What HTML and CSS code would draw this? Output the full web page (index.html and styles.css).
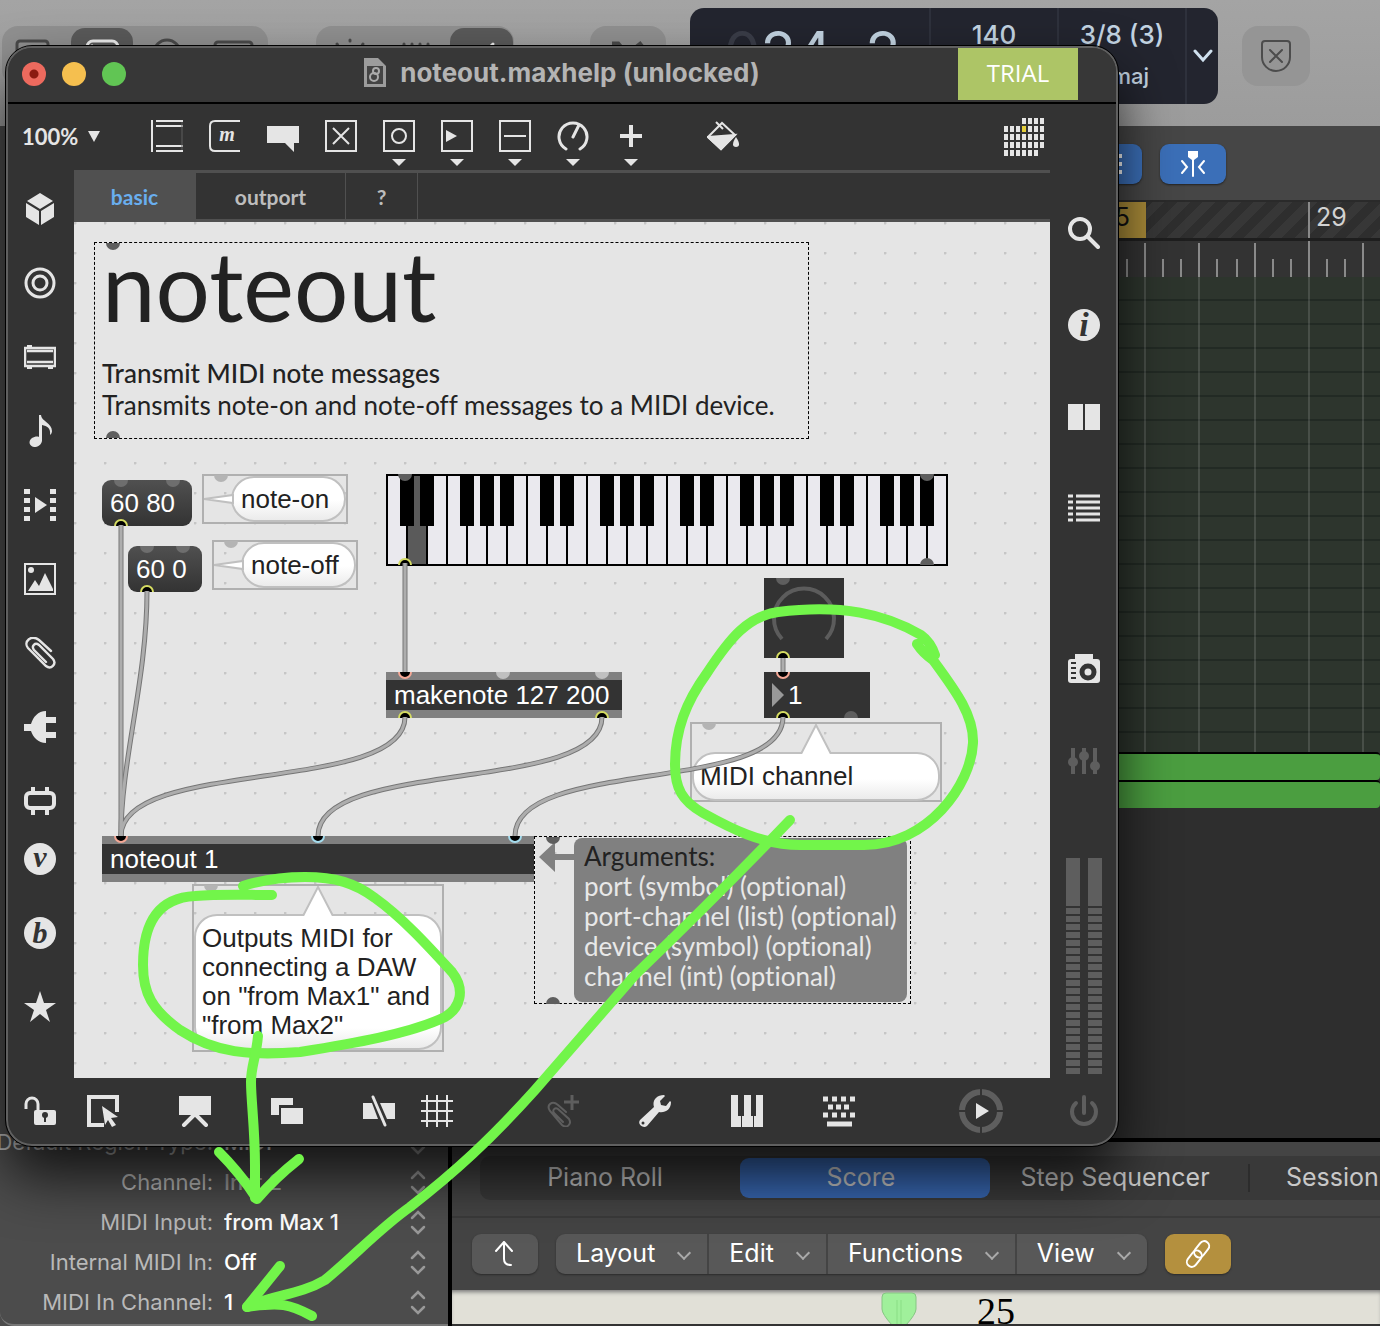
FILE: index.html
```html
<!doctype html>
<html lang="en">
  <head>
    <meta charset="UTF-8" />
    <meta name="viewport" content="width=device-width, initial-scale=1.0" />
    <title>noteout.maxhelp</title>
    <link rel="stylesheet" href="styles.css">
  </head>
  <body>
    <div class="daw">
      <header class="daw-header">
        <div class="tool-group">
          <svg width="266" height="60" fill="none" stroke="#4a4a4a" stroke-width="3">
            <rect x="69" y="2" width="62" height="56" rx="14" fill="#5a5a5a" stroke="none" />
            <rect x="15" y="15" width="31" height="26" rx="3" />
            <rect x="85" y="15" width="31" height="26" rx="6" stroke="#eee" />
            <path d="M89 19l8 8" stroke="#eee" />
            <circle cx="165" cy="27" r="13" />
            <rect x="213" y="16" width="37" height="24" rx="3" />
          </svg>
        </div>
        <div class="tool-group tool-group-mix">
          <svg width="198" height="60" fill="none" stroke="#4a4a4a" stroke-width="3" stroke-linecap="round">
            <rect x="134" y="2" width="63" height="56" rx="14" fill="#5a5a5a" stroke="none" />
            <path d="M34 14v1M21 18l1 2M47 18l-1 2M88 18v14M96 18v14M104 18v14M112 18v14" />
            <path d="M177 18l-18 18" stroke="#eee" />
          </svg>
        </div>
        <div class="tool-group tool-group-cut">
          <svg width="76" height="60" fill="none" stroke="#4a4a4a" stroke-width="5">
            <path d="M22 18h6l18 22M52 17l-10 8-20 14" />
          </svg>
        </div>
        <div class="lcd">
          <div class="lcd-position"><span class="dim">0</span>24&nbsp; 2</div>
          <div class="lcd-cell">140</div>
          <div class="lcd-cell lcd-key">3/8 (3)<span>maj</span></div>
          <button class="lcd-menu" aria-label="Display mode">
            <svg width="20" height="14" fill="none" stroke="#cfe0ee" stroke-width="3" stroke-linecap="round"><path d="M2 2l8 9 8-9" /></svg>
          </button>
        </div>
        <button class="replace-btn" aria-label="Replace">
          <svg width="32" height="34" fill="none" stroke="#4c4c4c" stroke-width="2" stroke-linecap="round">
            <path d="M5 2h22q3 0 3 3v13a14 14 0 0 1-28 0V5q0-3 3-3z" />
            <path d="M10 11l12 12M22 11L10 23" />
          </svg>
        </button>
      </header>

      <div class="daw-body">
        <aside class="inspector">
          <form class="params">
            <label for="region">Default Region Type:</label>
            <select id="region"><option>MIDI</option></select>
            <label for="channel">Channel:</label>
            <select id="channel" class="muted"><option>Inst 2</option></select>
            <label for="input">MIDI Input:</label>
            <select id="input"><option>from Max 1</option></select>
            <label for="internal">Internal MIDI In:</label>
            <select id="internal"><option>Off</option></select>
            <label for="inchannel">MIDI In Channel:</label>
            <select id="inchannel"><option>1</option></select>
          </form>
        </aside>

        <main class="workspace">
          <section class="tracks">
            <div class="track-tools">
              <button class="blue-btn" aria-label="List">
                <svg width="34" height="22" fill="#fff"><path d="M0 1h30v4H0zM0 9h30v4H0zM0 17h30v4H0z" /></svg>
              </button>
              <button class="blue-btn" aria-label="Catch playhead">
                <svg width="26" height="28" fill="none" stroke="#fff" stroke-width="2" stroke-linecap="round">
                  <path d="M8 1h10v6l-4 3h-2L8 7z" fill="#fff" stroke="none" />
                  <path d="M13 8v18M2 11l5 6-5 6M24 11l-5 6 5 6" />
                </svg>
              </button>
            </div>
            <div class="ruler"><span class="cycle">25</span><span class="bar">29</span></div>
            <div class="ticks">
              <svg width="262" height="36" stroke="#8a8a8a" stroke-width="2">
                <path d="M27 2v34M81 2v34M137 2v34M191 0v36M245 2v34" />
                <path d="M9 18v18M45 18v18M63 18v18M99 18v18M119 18v18M155 18v18M173 18v18M209 18v18M227 18v18" />
              </svg>
            </div>
            <div class="lanes">
              <svg width="262" height="475" stroke="#fff" stroke-opacity=".13" stroke-width="2">
                <path d="M27 0v475M81 0v475M137 0v475M191 0v475M245 0v475" />
              </svg>
            </div>
            <div class="region"></div>
            <div class="region"></div>
          </section>

          <section class="editor">
            <nav class="editor-tabs">
              <button>Piano Roll</button>
              <button class="active">Score</button>
              <button>Step Sequencer</button>
              <button class="session">Session Player</button>
            </nav>
            <div class="editor-menu">
              <button class="up-btn" aria-label="Up">
                <svg width="24" height="28" fill="none" stroke="#fff" stroke-width="2" stroke-linecap="round" stroke-linejoin="round"><path d="M3 11l8-9 8 9M11 2v17q0 6 7 6" /></svg>
              </button>
              <div class="menu-group">
                <button>Layout <i></i></button>
                <button>Edit <i></i></button>
                <button>Functions <i></i></button>
                <button>View <i></i></button>
              </div>
              <button class="link-btn" aria-label="Link">
                <svg width="30" height="30" fill="none" stroke="#fff" stroke-width="2">
                  <g transform="rotate(-52 15 15)"><rect x="0" y="10" width="18" height="10" rx="5" /><rect x="12" y="10" width="18" height="10" rx="5" /></g>
                </svg>
              </button>
            </div>
            <div class="paper">
              <svg width="36" height="34"><path d="M5 1h26q4 0 4 4v12q0 5-10 16H11Q1 22 1 17V5q0-4 4-4z" fill="#a0f09b" stroke="#86c583" /><path d="M16 8v24M20 8v24" stroke="#8ade85" /></svg>
              <span>25</span>
            </div>
          </section>
        </main>
      </div>
    </div>

    <div class="max-window">
      <header class="titlebar">
        <div class="lights">
          <button class="light close" aria-label="Close"></button>
          <button class="light minimize" aria-label="Minimize"></button>
          <button class="light zoom" aria-label="Zoom"></button>
        </div>
        <div class="window-title">
          <svg width="22" height="30" fill="none">
            <path d="M0 0h14l8 8v21H0z" fill="#9c9c9c" />
            <path d="M3 8h16v18H3z" fill="#444" />
            <circle cx="10" cy="19" r="4" stroke="#aaa" stroke-width="2" /><circle cx="12" cy="13" r="3" stroke="#aaa" stroke-width="2" />
          </svg>
          noteout.maxhelp (unlocked)
        </div>
        <div class="trial">TRIAL</div>
      </header>

      <div class="toolbar">
        <select class="zoom-level" aria-label="Zoom level"><option>100%</option></select>
        <div class="tools">
          <button aria-label="Object"><svg width="32" height="32" fill="none" stroke="#e5e5e5" stroke-width="2"><path d="M1 0v32M5 1h27M5 6h27M5 26h27M5 31h27" /><path d="M31 2v28" stroke="#5e5e5e" stroke-width="1" /></svg></button>
          <button aria-label="Message"><svg width="32" height="32" fill="none" stroke="#e5e5e5" stroke-width="2"><path d="M31 1H6Q1 1 1 6v20q0 5 5 5h25" /><text x="18" y="21" class="glyph-m">m</text></svg></button>
          <button aria-label="Comment"><svg width="32" height="32" fill="#e5e5e5"><path d="M0 6h32v17h-5v9l-9-9H0z" /></svg></button>
          <button aria-label="Toggle"><svg width="32" height="32" fill="none" stroke="#e5e5e5" stroke-width="2"><path d="M1 1h30v30H1zM8 8l16 16M24 8L8 24" /></svg></button>
          <button class="has-menu" aria-label="Button"><svg width="32" height="32" fill="none" stroke="#e5e5e5" stroke-width="2"><path d="M1 1h30v30H1z" /><circle cx="16" cy="16" r="7" /></svg></button>
          <button class="has-menu" aria-label="Number"><svg width="32" height="32" fill="none" stroke="#e5e5e5" stroke-width="2"><path d="M1 1h30v30H1z" /><path d="M5 10l11 6-11 6z" fill="#e5e5e5" stroke="none" /></svg></button>
          <button class="has-menu" aria-label="Slider"><svg width="32" height="32" fill="none" stroke="#e5e5e5" stroke-width="2"><path d="M1 1h30v30H1zM5 16h22" /></svg></button>
          <button class="has-menu" aria-label="Dial"><svg width="32" height="32" fill="none" stroke="#e5e5e5" stroke-width="3" stroke-linecap="round"><path d="M9 29a14 14 0 1 1 14 0M16 17l6-12" /></svg></button>
          <button class="has-menu" aria-label="Add"><svg width="32" height="32" stroke="#e5e5e5" stroke-width="4"><path d="M16 5v22M5 16h22" /></svg></button>
        </div>
        <button class="paint" aria-label="Format"><svg width="32" height="32" fill="none" stroke="#e5e5e5" stroke-width="2"><path d="M1 17L15 3l13 12-14 14zM9 2l7 7" /><path d="M1 17l27-2-14 14z" fill="#e5e5e5" /><path d="M29 17c4 6 4 10 0 10s-4-4 0-10z" fill="#e5e5e5" stroke="none" /></svg></button>
        <button class="calendar" aria-label="Clippings">
          <svg width="40" height="38" fill="none" stroke="#e5e5e5" stroke-width="6">
            <path d="M18 3h22" stroke-dasharray="4 2" />
            <path d="M0 11h40M0 19h40M0 27h40M0 35h34" stroke-dasharray="4 2" />
            <path d="M18 11h4" stroke="#e5cf3b" />
          </svg>
        </button>
      </div>

      <div class="window-body">
        <nav class="side side-left">
          <button aria-label="Packages"><svg width="32" height="32" fill="#e5e5e5"><path d="M16 0l13 8-13 8L3 8zM2 10l13 8v14L2 24zM30 10l-13 8v14l13-8z" /></svg></button>
          <button aria-label="Objects"><svg width="32" height="32" fill="none" stroke="#e5e5e5" stroke-width="3"><circle cx="16" cy="16" r="14" /><circle cx="16" cy="16" r="7" /></svg></button>
          <button aria-label="Devices"><svg width="32" height="32" fill="none" stroke="#e5e5e5" stroke-width="2"><path d="M1 7h30v18H1zM3 10h26M3 21h26" stroke-width="2.5" /><path d="M4 7V5h3v2M4 26v1h3v-1M25 26v1h3v-1" fill="#e5e5e5" /></svg></button>
          <button aria-label="Audio"><svg width="32" height="32" fill="#e5e5e5"><path d="M15 0h2c0 6 11 8 11 16 0 2-1 3-2 4 1-7-3-9-8-10v16c-1 4-4 6-8 6-5-1-6-6-2-9 2-1 5-2 7-1z" /></svg></button>
          <button aria-label="Video"><svg width="32" height="32" fill="none" stroke="#e5e5e5" stroke-width="6"><path d="M3 0v32M29 0v32" stroke-dasharray="5 4" /><path d="M11 8l12 8-12 8z" fill="#e5e5e5" stroke="none" /></svg></button>
          <button aria-label="Images"><svg width="32" height="32" fill="#e5e5e5"><path d="M1 1h30v30H1z" fill="none" stroke="#e5e5e5" stroke-width="2" /><circle cx="7" cy="7" r="3" /><path d="M4 28l7-11 4 6 6-13 8 16v2z" /></svg></button>
          <button aria-label="Attachments"><svg width="32" height="32" fill="none" stroke="#e5e5e5" stroke-width="3" stroke-linecap="round"><path id="clip" d="M27 14L15 3C7-3-1 5 4 11l18 18c5 4 11-2 7-7L15 8c-4-3-8 1-5 5l12 12" stroke-width="2.4" /></svg></button>
          <button aria-label="Plug-ins"><svg width="32" height="32" fill="#e5e5e5"><path d="M22 0v32C14 32 9 26 7 20H0v-7h7C9 6 14 0 22 0zM22 6h10v6H22zM22 21h10v6H22z" /></svg></button>
          <button aria-label="Modules"><svg width="32" height="32" fill="none" stroke="#e5e5e5" stroke-width="4"><rect x="2" y="8" width="28" height="15" rx="4" /><path d="M9 2v5M23 2v5M9 24v6M23 24v6" /></svg></button>
          <button class="near" aria-label="Vizzie"><svg width="32" height="32"><circle cx="16" cy="16" r="16" fill="#e5e5e5" /><text x="16" y="24" class="glyph">v</text></svg></button>
          <button aria-label="BEAP"><svg width="32" height="32"><circle cx="16" cy="16" r="16" fill="#e5e5e5" /><text x="16" y="26" class="glyph">b</text></svg></button>
          <button aria-label="Favorites"><svg width="32" height="32" fill="#e5e5e5"><path d="M16 0l4 12h12l-10 7 4 12-10-8-10 8 4-12-10-7h12z" /></svg></button>
        </nav>

        <div class="center">
          <nav class="patch-tabs">
            <button class="active">basic</button>
            <button>outport</button>
            <button class="small">?</button>
          </nav>

          <div class="canvas">
            <div class="panel help-title">
              <h1>noteout</h1>
              <p class="digest">Transmit MIDI note messages</p>
              <p>Transmits note-on and note-off messages to a MIDI device.</p>
            </div>

            <button class="message on">60 80</button>
            <button class="message off">60 0</button>

            <div class="bubble-frame side-bubble note-on"><svg width="32" height="46"><path d="M0 23l29-4v8z" /></svg><p>note-on</p></div>
            <div class="bubble-frame side-bubble note-off"><svg width="32" height="46"><path d="M0 23l29-4v8z" /></svg><p>note-off</p></div>

            <svg class="kslider" width="562" height="92">
              <path d="M1 1h560v90H1z" fill="#eae9ee" />
              <path d="M21 2h20v88H21z" fill="#5a5a5a" />
              <path d="M21 0v92M41 0v92M61 0v92M81 0v92M101 0v92M121 0v92M141 0v92M161 0v92M181 0v92M201 0v92M221 0v92M241 0v92M261 0v92M281 0v92M301 0v92M321 0v92M341 0v92M361 0v92M381 0v92M401 0v92M421 0v92M441 0v92M461 0v92M481 0v92M501 0v92M521 0v92M541 0v92" stroke="#000" stroke-width="2" />
              <path d="M28 2h6v50h-6z" fill="#5a5a5a" />
              <path d="M21 0v52M41 0v52M81 0v52M101 0v52M121 0v52M161 0v52M181 0v52M221 0v52M241 0v52M261 0v52M301 0v52M321 0v52M361 0v52M381 0v52M401 0v52M441 0v52M461 0v52M501 0v52M521 0v52M541 0v52" stroke="#000" stroke-width="14" />
              <path d="M1 1h560v90H1z" fill="none" stroke="#000" stroke-width="2" />
            </svg>

            <svg class="dial" width="80" height="80" fill="none" stroke="#5c5c5c" stroke-width="4"><path d="M18 61a30 30 0 1 1 44 0" /></svg>
            <div class="number"><svg width="12" height="24"><path d="M0 0l12 12L0 24z" fill="#999" /></svg><input type="text" value="1" aria-label="MIDI channel" /></div>

            <div class="object makenote">makenote 127 200</div>
            <div class="object noteout">noteout 1</div>

            <div class="bubble-frame top-bubble channel"><svg width="32" height="30"><path d="M1 30L16 1l15 29" /></svg><p>MIDI channel</p></div>
            <div class="bubble-frame top-bubble outputs"><svg width="32" height="30"><path d="M1 30L16 1l15 29" /></svg><p>Outputs MIDI for connecting a DAW on "from Max1" and "from Max2"</p></div>

            <div class="panel arguments">
              <svg width="38" height="30" fill="#808080"><path d="M3 15L19 0v12h19v6H19v12z" /></svg>
              <div>
                <strong>Arguments:</strong>
                <p>port (symbol) (optional)</p>
                <p>port-channel (list) (optional)</p>
                <p>device (symbol) (optional)</p>
                <p>channel (int) (optional)</p>
              </div>
            </div>

            <!-- patch cords and ports -->
            <svg class="cords" width="100%" height="100%">
              <defs>
                <path id="in" d="M-7 0a7 7 0 0 0 14 0z" />
                <path id="out" d="M-7 0a7 7 0 0 1 14 0z" />
                <path id="inring" d="M-6 0a6 6 0 0 0 12 0" fill="#000" stroke-width="2" />
                <path id="outring" d="M-6 0a6 6 0 0 1 12 0" fill="#000" stroke="#d5dc62" stroke-width="2" />
                <g id="wires">
                  <path d="M47 303V614" />
                  <path d="M73 369C73 458 47 538 47 614" />
                  <path d="M331 341V450" />
                  <path d="M331 495C331 572 47 536 47 614" />
                  <path d="M528 495C528 572 244 536 244 614" />
                  <path d="M709 436V450" />
                  <path d="M709 495C709 572 441 536 441 614" />
                </g>
              </defs>
              <g fill="#5e5e5e">
                <use href="#in" x="39" y="21" /><use href="#out" x="39" y="216" />
                <use href="#in" x="331" y="252" /><use href="#in" x="853" y="252" /><use href="#out" x="853" y="343" />
                <use href="#in" x="709" y="356" /><use href="#out" x="777" y="496" />
                <use href="#in" x="479" y="615" /><use href="#out" x="479" y="782" />
              </g>
              <g fill="#6e6e6e">
                <use href="#in" x="47" y="258" /><use href="#in" x="99" y="258" />
                <use href="#in" x="73" y="324" /><use href="#in" x="109" y="324" />
              </g>
              <g fill="#b4b4b4">
                <use href="#in" x="147" y="253" /><use href="#in" x="157" y="319" />
                <use href="#in" x="635" y="501" /><use href="#in" x="137" y="663" />
                <use href="#in" x="429" y="450" fill="#c0c0c0" /><use href="#in" x="528" y="450" fill="#c0c0c0" />
              </g>
              <g stroke="#f5a896"><use href="#inring" x="47" y="614" /><use href="#inring" x="331" y="450" /><use href="#inring" x="709" y="450" /></g>
              <g stroke="#a4dcee"><use href="#inring" x="244" y="614" /><use href="#inring" x="441" y="614" /></g>
              <use href="#outring" x="47" y="304" /><use href="#outring" x="73" y="370" /><use href="#outring" x="331" y="343" />
              <use href="#outring" x="331" y="496" /><use href="#outring" x="528" y="496" />
              <use href="#outring" x="709" y="436" /><use href="#outring" x="709" y="496" />
              <use href="#wires" fill="none" stroke="#767676" stroke-width="5" />
              <use href="#wires" fill="none" stroke="#adadad" stroke-width="3" />
            </svg>
          </div>
        </div>

        <nav class="side side-right">
          <button aria-label="Search"><svg width="32" height="32" fill="none" stroke="#e5e5e5" stroke-width="4" stroke-linecap="round"><circle cx="12" cy="12" r="10" /><path d="M20 20l10 10" /></svg></button>
          <button aria-label="Inspector"><svg width="32" height="32"><circle cx="16" cy="16" r="16" fill="#e5e5e5" /><text x="16" y="27" class="glyph big">i</text></svg></button>
          <button aria-label="Reference"><svg width="32" height="32" fill="#e5e5e5"><path d="M0 3h15v26H0zM17 3h15v26H17z" /></svg></button>
          <button aria-label="Console"><svg width="32" height="32" fill="none" stroke="#e5e5e5" stroke-width="3"><path d="M0 3h5M8 3h24M0 9h5M8 9h24M0 15h5M8 15h24M0 21h5M8 21h24M0 27h5M8 27h24" /></svg></button>
          <button class="far" aria-label="Snapshots"><svg width="32" height="32" fill="#e5e5e5"><path d="M7 1h18v5H7z" /><rect y="6" width="32" height="24" rx="3" /><circle cx="20" cy="19" r="6" fill="none" stroke="#333" stroke-width="5" /><path d="M3 10h5M3 15h5M3 20h5M3 25h5" stroke="#333" stroke-width="2" /></svg></button>
          <button aria-label="Mixer"><svg width="32" height="32" fill="#5e5e5e" stroke="#5e5e5e" stroke-width="4"><path d="M5 3v26M16 3v26M27 3v26" /><circle cx="5" cy="17" r="3" /><circle cx="16" cy="11" r="3" /><circle cx="27" cy="21" r="3" /></svg></button>
          <div class="meters"><span></span><span></span></div>
        </nav>
      </div>

      <footer class="bottombar">
        <button class="lock" aria-label="Lock"><svg width="32" height="32" fill="#e5e5e5"><path d="M2 14v-5a6 6 0 0 1 12 0v6" fill="none" stroke="#e5e5e5" stroke-width="3" /><rect x="10" y="15" width="22" height="15" rx="2" /><path d="M21 21v6" stroke="#333" stroke-width="2" /><circle cx="21" cy="20" r="3" fill="#333" /></svg></button>
        <div class="bottom-group">
          <button aria-label="Select"><svg width="32" height="32" fill="#e5e5e5"><path d="M30 17V2H2v28h15" fill="none" stroke="#e5e5e5" stroke-width="4" /><path d="M15 11l16 11-7 1 5 7-4 2-4-7-3 5z" /></svg></button>
          <button aria-label="Presentation"><svg width="32" height="32" fill="#e5e5e5"><path d="M0 1h32v19H0z" /><path d="M16 19L5 30M16 19l11 11" stroke="#e5e5e5" stroke-width="4" stroke-linecap="round" /></svg></button>
          <button aria-label="Windows"><svg width="32" height="32" fill="#e5e5e5"><path d="M0 3h22v7H8v10H0zM10 13h22v16H10z" /></svg></button>
          <button aria-label="Hide cords"><svg width="32" height="32" fill="#e5e5e5" stroke="#e5e5e5"><path d="M0 8h9l6 16H0zM17 8h15v16h-8z" stroke="none" /><path d="M10 2l12 28" stroke-width="3" stroke-linecap="round" /></svg></button>
        </div>
        <button class="grid-btn" aria-label="Grid"><svg width="32" height="32" stroke="#e5e5e5" stroke-width="2"><path d="M6 0v32M16 0v32M26 0v32M0 6h32M0 16h32M0 26h32" /></svg></button>
        <div class="bottom-group extras">
          <button aria-label="Add clip"><svg width="32" height="32" fill="none" stroke="#5e5e5e" stroke-width="3"><path d="M19 17l-8-7C5 5-1 10 3 16l12 14c5 4 10-1 7-6L11 14c-3-2-6 1-4 4l9 9" stroke-width="2" stroke-linecap="round" /><path d="M17 7h15M25 0v15" /></svg></button>
          <button aria-label="Tools"><svg width="32" height="32" fill="#e5e5e5"><path d="M1 25L15 12C13 6 17 0 25 0l1 1-5 5 1 4 5 1 4-5 1 1c0 8-6 11-12 10L8 31c-4 3-10-2-7-6z" /><circle cx="4" cy="28" r="1.5" fill="#333" /></svg></button>
          <button aria-label="Keyboard"><svg width="32" height="32" fill="#e5e5e5"><path d="M0 0h7v21h3v11H0zM13 0h7v21h2v11H11V21h2zM25 0h7v32h-9V21h2z" /></svg></button>
          <button aria-label="Keys"><svg width="32" height="32" fill="none" stroke="#e5e5e5" stroke-width="5"><path d="M0 4h32M0 20h32" stroke-dasharray="5 4" /><path d="M5 12h22" stroke-dasharray="5 3" /><path d="M4 29h25" /></svg></button>
        </div>
        <button class="play" aria-label="Play"><svg width="44" height="44"><circle cx="22" cy="22" r="19" fill="none" stroke="#5e5e5e" stroke-width="6" /><path d="M22 0v44M0 22h44" stroke="#333" stroke-width="2" /><circle cx="22" cy="22" r="15" fill="#333" /><path d="M17 14l13 8-13 8z" fill="#e5e5e5" /></svg></button>
        <button class="power" aria-label="Audio on"><svg width="32" height="32" fill="none" stroke="#5e5e5e" stroke-width="4" stroke-linecap="round"><path d="M16 2v16M8 8a12 12 0 1 0 16 0" /></svg></button>
      </footer>
    </div>

    <!-- hand-drawn marker notes -->
    <svg class="marker" width="100%" height="100%">
      <path d="M917 644C921 650 927 656 933 660C955 690 974 715 973 743C971 785 928 845 864 845H800C762 845 730 828 703 813C682 801 675 788 675 765C675 730 686 702 707 673C730 638 748 616 778 612C842 604 885 614 921 635C928 640 932 646 935 655" />
      <path d="M243 886C262 880 285 877 305 877C335 877 355 883 375 898C403 918 430 948 452 972C466 990 460 1008 445 1017C410 1034 350 1044 300 1052C250 1056 215 1053 180 1030C152 1010 143 993 143 965C143 925 157 898 195 896C220 894 245 895 272 895" />
      <path d="M258 1036C256 1058 251 1066 251 1082C251 1100 255 1130 255 1165V1198" />
      <path d="M219 1152C235 1168 246 1182 257 1199C268 1186 280 1174 299 1159" />
      <path d="M790 820C744 868 690 922 635 975L535 1090C490 1140 455 1172 410 1207C380 1228 350 1260 325 1280C300 1295 272 1295 247 1307" />
      <path d="M280 1266L247 1307C280 1302 290 1304 312 1316" />
    </svg>
  </body>
</html>
```
FILE: styles.css
```css
:root {
  --chrome: #333333;
  --icon: #e5e5e5;
  --ink: #72f54a;
  --canvas: #e5e5e5;
}

* {
  box-sizing: border-box;
}

body {
  position: relative;
  margin: 0;
  min-height: 100vh;
  overflow: hidden;
  background: #333;
  font-family: Inter, "Liberation Sans", sans-serif;
}

h1,
p {
  margin: 0;
  font-weight: 400;
}

button,
select,
input {
  margin: 0;
  padding: 0;
  border: 0;
  background: none;
  color: inherit;
  font: inherit;
  appearance: none;
}

button {
  display: flex;
  align-items: center;
  justify-content: center;
}

svg {
  display: block;
  flex-shrink: 0;
}

/* DAW behind the patcher */
.daw {
  display: flex;
  flex-direction: column;
  min-height: 100vh;
}

.daw-header {
  display: flex;
  align-items: flex-start;
  height: 126px;
  padding: 8px 0 0 2px;
  background: linear-gradient(#a4a4a4, #9c9c9c);
}

.tool-group {
  margin-top: 18px;
  border-radius: 16px;
  background: #909090;
}

.tool-group-mix {
  margin-left: 48px;
}

.tool-group-cut {
  margin-left: 76px;
}

.lcd {
  display: flex;
  width: 528px;
  height: 96px;
  margin-left: 24px;
  border-radius: 14px;
  background: #23252f;
  color: #c3d4e2;
}

.lcd-position {
  width: 239px;
  padding: 12px 0 0 34px;
  font-size: 58px;
  line-height: 64px;
  white-space: nowrap;
}

.dim {
  color: #3a3d48;
}

.lcd-cell {
  width: 128px;
  padding-top: 12px;
  border-left: 2px solid #2e313c;
  font-size: 26px;
  font-weight: 500;
  line-height: 30px;
  text-align: center;
}

.lcd-key span {
  display: block;
  padding: 12px 36px 0 0;
  font-size: 22px;
  line-height: 28px;
  text-align: right;
}

.lcd-menu {
  flex: 1;
  border-left: 2px solid #2e313c;
}

.replace-btn {
  width: 68px;
  height: 60px;
  margin: 18px 0 0 24px;
  border-radius: 16px;
  background: #959595;
}

.daw-body {
  display: flex;
  flex: 1;
}

.inspector {
  display: flex;
  flex-direction: column;
  justify-content: flex-end;
  width: 452px;
  border-right: 4px solid #000;
  background: #4c4c4c;
}

.params {
  display: grid;
  grid-template-columns: 213px 1fr;
  grid-auto-rows: 40px;
  align-items: center;
  column-gap: 11px;
  padding: 0 22px 2px 0;
  border-bottom: 2px solid #777;
  border-radius: 0 0 0 14px;
  color: #b9b9b9;
  font-size: 22px;
  white-space: nowrap;
}

.params label {
  justify-self: end;
}

.params select {
  width: 100%;
  height: 30px;
  background: url("data:image/svg+xml,%3Csvg xmlns='http://www.w3.org/2000/svg' width='16' height='26' fill='none' stroke='%23999' stroke-width='2.5' stroke-linecap='round'%3E%3Cpath d='M2 9l6-6 6 6M2 18l6 6 6-6'/%3E%3C/svg%3E") no-repeat right center;
  color: #fff;
  font-weight: 500;
}

.params select.muted {
  color: #999;
}

.workspace {
  display: flex;
  flex: 1;
  flex-direction: column;
  min-width: 0;
}

.tracks {
  flex: 1;
  border-bottom: 4px solid #000;
  background: #2e2e2e;
}

.track-tools {
  display: flex;
  gap: 18px;
  justify-content: flex-end;
  height: 74px;
  padding: 18px 154px 0 0;
  background: #464646;
}

.blue-btn {
  width: 66px;
  height: 40px;
  border-radius: 9px;
  background: #3b6fb8;
  box-shadow: 0 1px 2px #222;
}

.ruler {
  display: flex;
  justify-content: flex-end;
  height: 41px;
  border-top: 2px solid #2a2a2a;
  border-bottom: 3px solid #1e1e1e;
  background: repeating-linear-gradient(135deg, #2e2e2e 0 9px, #373737 9px 18px);
  color: #d2d2d2;
  font-size: 25px;
  line-height: 30px;
}

.cycle {
  width: 120px;
  padding-right: 16px;
  background: #a88a38;
  color: #111;
  text-align: right;
}

.bar {
  width: 72px;
  margin-left: 162px;
  padding-left: 6px;
  border-left: 2px solid #8a8a8a;
}

.ticks,
.lanes {
  display: flex;
  justify-content: flex-end;
  background-color: #333;
}

.lanes {
  background: repeating-linear-gradient(#2d352d 0 22px, #222a24 22px 24px);
}

.region {
  height: 28px;
  border-top: 2px solid #000;
  border-radius: 0 4px 4px 0;
  background: #4b9e40;
}

.editor {
  background: #444;
  color: #e0e0e0;
  font-size: 25px;
}

.editor-tabs {
  display: flex;
  align-items: center;
  height: 44px;
  margin: 14px 0 16px 28px;
  overflow: hidden;
  border-radius: 10px 0 0 10px;
  background: #393939;
  color: #c8c8c8;
}

.editor-tabs button {
  flex: 0 0 250px;
  height: 40px;
  padding-bottom: 2px;
  white-space: nowrap;
}

.editor-tabs .active {
  margin-left: 10px;
  padding-right: 8px;
  border-radius: 9px;
  background: #3766b0;
}

.editor-tabs .session {
  height: 28px;
  margin-left: 8px;
  padding-left: 36px;
  border-left: 2px solid #2c2c2c;
  justify-content: flex-start;
}

.editor-menu {
  display: flex;
  gap: 18px;
  padding: 16px 20px;
  border-top: 2px solid #3a3a3a;
  color: #fff;
}

.up-btn,
.link-btn {
  width: 66px;
  height: 40px;
  border-radius: 9px;
  background: #585858;
  box-shadow: 0 1px 2px #2a2a2a;
}

.link-btn {
  background: #b4903e;
}

.menu-group {
  display: flex;
  border-radius: 9px;
  background: #585858;
  box-shadow: 0 1px 2px #2a2a2a;
}

.menu-group button {
  gap: 24px;
  padding: 0 18px 2px 20px;
}

.menu-group button + button {
  border-left: 2px solid #444;
}

.menu-group i {
  width: 10px;
  height: 10px;
  border: solid #aaa;
  border-width: 0 2px 2px 0;
  transform: rotate(45deg);
}

.paper {
  display: flex;
  align-items: flex-start;
  gap: 60px;
  height: 36px;
  padding: 2px 0 0 429px;
  overflow: hidden;
  border-bottom: 2px solid #333;
  background: #e1e0d7;
  box-shadow: inset 0 4px 4px -2px #777;
  color: #000;
  font: 38px/38px "Liberation Serif", serif;
}

/* Patcher window */
.max-window {
  position: absolute;
  top: 46px;
  right: 262px;
  bottom: 180px;
  left: 6px;
  display: flex;
  flex-direction: column;
  overflow: hidden;
  border: 2px solid #606060;
  border-radius: 26px;
  outline: 1px solid #000;
  background: var(--chrome);
  box-shadow: 0 30px 56px rgba(0, 0, 0, 0.75);
  color: var(--icon);
  font-family: Lato, sans-serif;
}

.titlebar {
  display: grid;
  grid-template-columns: 1fr auto 1fr;
  height: 56px;
  border-bottom: 2px solid #000;
  background: #373737;
}

.lights {
  display: flex;
  gap: 16px;
  align-items: center;
  padding: 0 0 2px 14px;
}

.light {
  width: 24px;
  height: 24px;
  border-radius: 50%;
}

.close {
  background: radial-gradient(circle, #8c1a10 0 4px, #ed6a5e 5px);
}

.minimize {
  background: #f5bf4f;
}

.zoom {
  background: #61c554;
}

.window-title {
  display: flex;
  gap: 14px;
  align-items: center;
  padding-bottom: 4px;
  color: #b4b4b4;
  font: 700 26px/32px Inter, sans-serif;
}

.trial {
  justify-self: end;
  width: 120px;
  height: 52px;
  margin-right: 38px;
  background: #adc566;
  color: #fff;
  font: 24px/50px "Open Sans", sans-serif;
  text-align: center;
}

.toolbar {
  display: flex;
  align-items: center;
  height: 66px;
  padding: 0 72px 2px 14px;
}

.zoom-level {
  width: 80px;
  height: 32px;
  background: url("data:image/svg+xml,%3Csvg xmlns='http://www.w3.org/2000/svg' width='12' height='11'%3E%3Cpath d='M0 0h12L6 11z' fill='%23e5e5e5'/%3E%3C/svg%3E") no-repeat right 2px center;
  font-size: 22px;
  font-weight: 700;
}

.tools {
  display: flex;
  gap: 26px;
  margin-left: 49px;
}

.tools button {
  position: relative;
}

.has-menu::after {
  content: "";
  position: absolute;
  top: 39px;
  left: 9px;
  border: 7px solid transparent;
  border-top-color: var(--icon);
  border-bottom: 0;
}

.paint {
  margin-left: 60px;
}

.calendar {
  margin-left: auto;
  padding-top: 2px;
}

.glyph,
.glyph-m {
  fill: #333;
  font: italic 700 30px "Liberation Serif", serif;
  text-anchor: middle;
}

.glyph-m {
  fill: var(--icon);
  stroke: none;
  font-size: 20px;
}

.big {
  font-size: 34px;
}

.window-body {
  display: flex;
  flex: 1;
  min-height: 0;
}

.side {
  display: flex;
  flex-direction: column;
  align-items: center;
  width: 66px;
}

.side-left {
  gap: 42px;
  padding: 23px 2px 0 0;
}

.side-left .near {
  margin-top: -16px;
}

.side-right {
  gap: 60px;
  padding: 47px 0 0 2px;
}

.side-right .far {
  margin-top: 68px;
}

.meters {
  display: flex;
  flex: 1;
  gap: 8px;
  margin: 21px 0 2px;
}

.meters span {
  width: 14px;
  background:
    linear-gradient(#5e5e5e 48px, transparent 48px),
    repeating-linear-gradient(transparent 0 2px, #5e5e5e 2px 8px);
}

.center {
  display: flex;
  flex: 1;
  flex-direction: column;
  min-width: 0;
}

.patch-tabs {
  display: flex;
  height: 52px;
  border-top: 3px solid #505050;
  border-bottom: 3px solid #505050;
  color: #bdbdbd;
  font-size: 21px;
  font-weight: 700;
}

.patch-tabs button {
  width: 150px;
  border-right: 1px solid #505050;
}

.patch-tabs .active {
  width: 122px;
  background: #505050;
  color: #69aeee;
}

.patch-tabs .small {
  width: 72px;
}

.canvas {
  position: relative;
  flex: 1;
  overflow: hidden;
  background: radial-gradient(circle at 1px 1px, #c6c6c6 0 1px, transparent 2px) 0 0 / 30px 30px var(--canvas);
  color: #222;
  font: 26px/30px "Liberation Sans", Arial, sans-serif;
  font-variant-ligatures: none;
}

.cords,
.marker {
  position: absolute;
  top: 0;
  left: 0;
  pointer-events: none;
}

.panel {
  position: absolute;
  border: 1px dashed #000;
  background: var(--canvas);
  font-family: Lato, sans-serif;
}

.help-title {
  top: 20px;
  left: 20px;
  width: 715px;
  height: 197px;
  padding: 0 7px;
  line-height: 32px;
  white-space: nowrap;
}

.help-title h1 {
  padding-bottom: 30px;
  font-size: 96px;
  line-height: 84px;
}

.digest {
  font-weight: 500;
}

.message {
  position: absolute;
  height: 46px;
  border-radius: 9px;
  background: linear-gradient(#505050, #333);
  color: #fff;
  padding-left: 8px;
  justify-content: flex-start;
}

.on {
  top: 258px;
  left: 28px;
  width: 90px;
}

.off {
  top: 324px;
  left: 54px;
  width: 74px;
}

.bubble-frame {
  position: absolute;
  display: flex;
  border: 2px solid #b0b0b0;
}

.bubble-frame svg {
  position: relative;
  z-index: 1;
  fill: #fff;
  stroke: #c0c0c0;
  stroke-width: 2;
}

.bubble-frame p {
  flex: 1;
  padding: 6px 8px;
  border: 2px solid #c0c0c0;
  border-radius: 23px;
  background: linear-gradient(#fff calc(100% - 20px), #ebebeb);
}

.side-bubble {
  width: 146px;
  height: 50px;
}

.side-bubble svg {
  margin-right: -5px;
}

.note-on {
  top: 252px;
  left: 128px;
}

.note-off {
  top: 318px;
  left: 138px;
}

.top-bubble {
  flex-direction: column;
  width: 252px;
}

.top-bubble svg {
  align-self: center;
  margin-bottom: -2px;
}

.channel {
  top: 500px;
  left: 616px;
  height: 80px;
}

.top-bubble p {
  padding: 8px 6px;
  line-height: 29px;
}

.outputs {
  top: 662px;
  left: 118px;
  height: 168px;
}

.kslider {
  position: absolute;
  top: 252px;
  left: 312px;
}

.dial {
  position: absolute;
  top: 356px;
  left: 690px;
  background: var(--chrome);
}

.number {
  position: absolute;
  top: 450px;
  left: 690px;
  display: flex;
  align-items: center;
  gap: 4px;
  width: 106px;
  height: 46px;
  padding-left: 8px;
  background: var(--chrome);
  color: #fff;
}

.number input {
  width: 60px;
}

.object {
  position: absolute;
  height: 46px;
  padding-left: 8px;
  border: solid #808080;
  border-width: 8px 0;
  background: var(--chrome);
  color: #fff;
}

.makenote {
  top: 450px;
  left: 312px;
  width: 236px;
}

.noteout {
  top: 614px;
  left: 28px;
  width: 432px;
}

.arguments {
  top: 614px;
  left: 460px;
  display: flex;
  width: 377px;
  height: 168px;
  padding: 1px 3px 1px 1px;
  background: transparent;
}

.arguments svg {
  margin-top: 4px;
}

.arguments div {
  flex: 1;
  padding: 3px 10px;
  border-radius: 8px;
  background: #808080;
  color: #e8e8e8;
  white-space: nowrap;
}

.arguments strong {
  color: #222;
  font-weight: 400;
}

.bottombar {
  display: flex;
  align-items: center;
  height: 66px;
  padding: 0 16px;
}

.lock {
  margin-right: 31px;
}

.bottom-group {
  display: flex;
  gap: 60px;
}

.grid-btn {
  margin-left: 26px;
}

.extras {
  margin-left: 94px;
}

.play {
  margin: 0 65px 0 auto;
}

.marker {
  fill: none;
  stroke: var(--ink);
  stroke-width: 10;
  stroke-linecap: round;
  stroke-linejoin: round;
}
```
